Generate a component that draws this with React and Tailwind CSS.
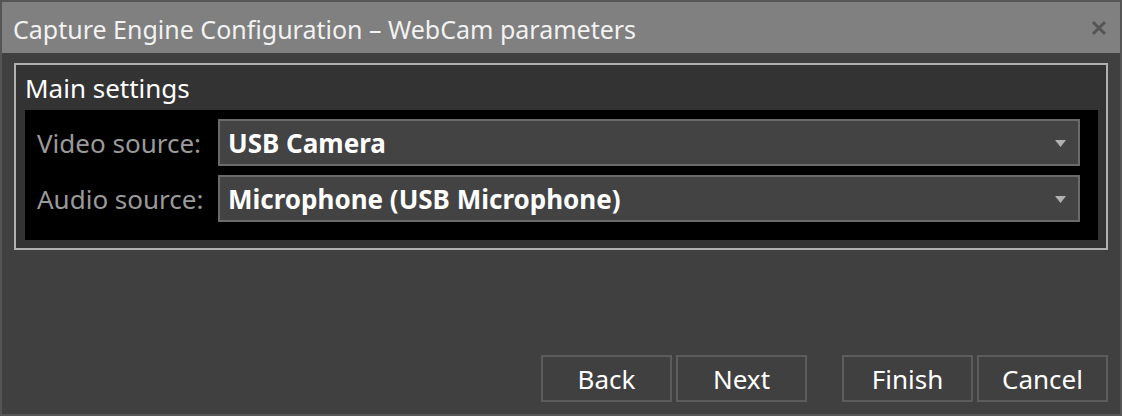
const font = { fontFamily: '"Noto Sans", "Open Sans", sans-serif' };

function SourceRow({ label, value }) {
  return (
    <div className="flex items-center">
      <div className="w-[181px] text-[26px] text-[#9a9a9a] leading-none">{label}</div>
      <div className="flex-1 h-[47px] flex items-center justify-between border-2 border-[#6a6a6a] bg-[#434343] pl-[8px] pr-[12px]">
        <span className="text-[26px] font-bold text-white leading-none">{value}</span>
        {/* dropdown arrow */}
        <svg width="11" height="7" viewBox="0 0 11 7" className="mt-[1px]">
          <polygon points="0,0 11,0 5.5,7" fill="#b0b0b0" />
        </svg>
      </div>
    </div>
  );
}

function DialogButton({ children }) {
  return (
    <button className="w-[131px] h-[47px] border-2 border-[#5c5c5c] bg-[#404040] text-[26px] text-white leading-none">
      {children}
    </button>
  );
}

export default function App() {
  return (
    <div style={font} className="w-[1122px] h-[416px] bg-[#404040] border-2 border-[#555555] flex flex-col overflow-hidden">
      {/* Title bar */}
      <div className="h-[51px] bg-[#808080] flex items-center justify-between pl-[11px] pr-[13px] pt-[3px] shrink-0">
        <span className="text-[25px] text-[#f2f2f2] leading-none">Capture Engine Configuration – WebCam parameters</span>
        <svg width="16" height="16" viewBox="0 0 16 16" className="-mt-[3px]">
          <path d="M2 2 L14 14 M14 2 L2 14" stroke="#555555" strokeWidth="3" />
        </svg>
      </div>

      {/* Body */}
      <div className="flex-1 flex flex-col px-[12px] pt-[10px] pb-[12px]">
        <div className="border-2 border-[#b0b0b0] bg-[#333333] px-[9px] pb-[8px] pr-[8px]">
          <div className="h-[45px] flex items-center text-[26px] text-white leading-none">Main settings</div>
          <div className="bg-black pl-[12px] pr-[18px] pt-[9px] pb-[18px] flex flex-col gap-[9px]">
            <SourceRow label="Video source:" value="USB Camera" />
            <SourceRow label="Audio source:" value="Microphone (USB Microphone)" />
          </div>
        </div>

        <div className="mt-auto flex justify-end">
          <div className="flex gap-[4px]">
            <DialogButton>Back</DialogButton>
            <DialogButton>Next</DialogButton>
          </div>
          <div className="flex gap-[4px] ml-[35px]">
            <DialogButton>Finish</DialogButton>
            <DialogButton>Cancel</DialogButton>
          </div>
        </div>
      </div>
    </div>
  );
}
